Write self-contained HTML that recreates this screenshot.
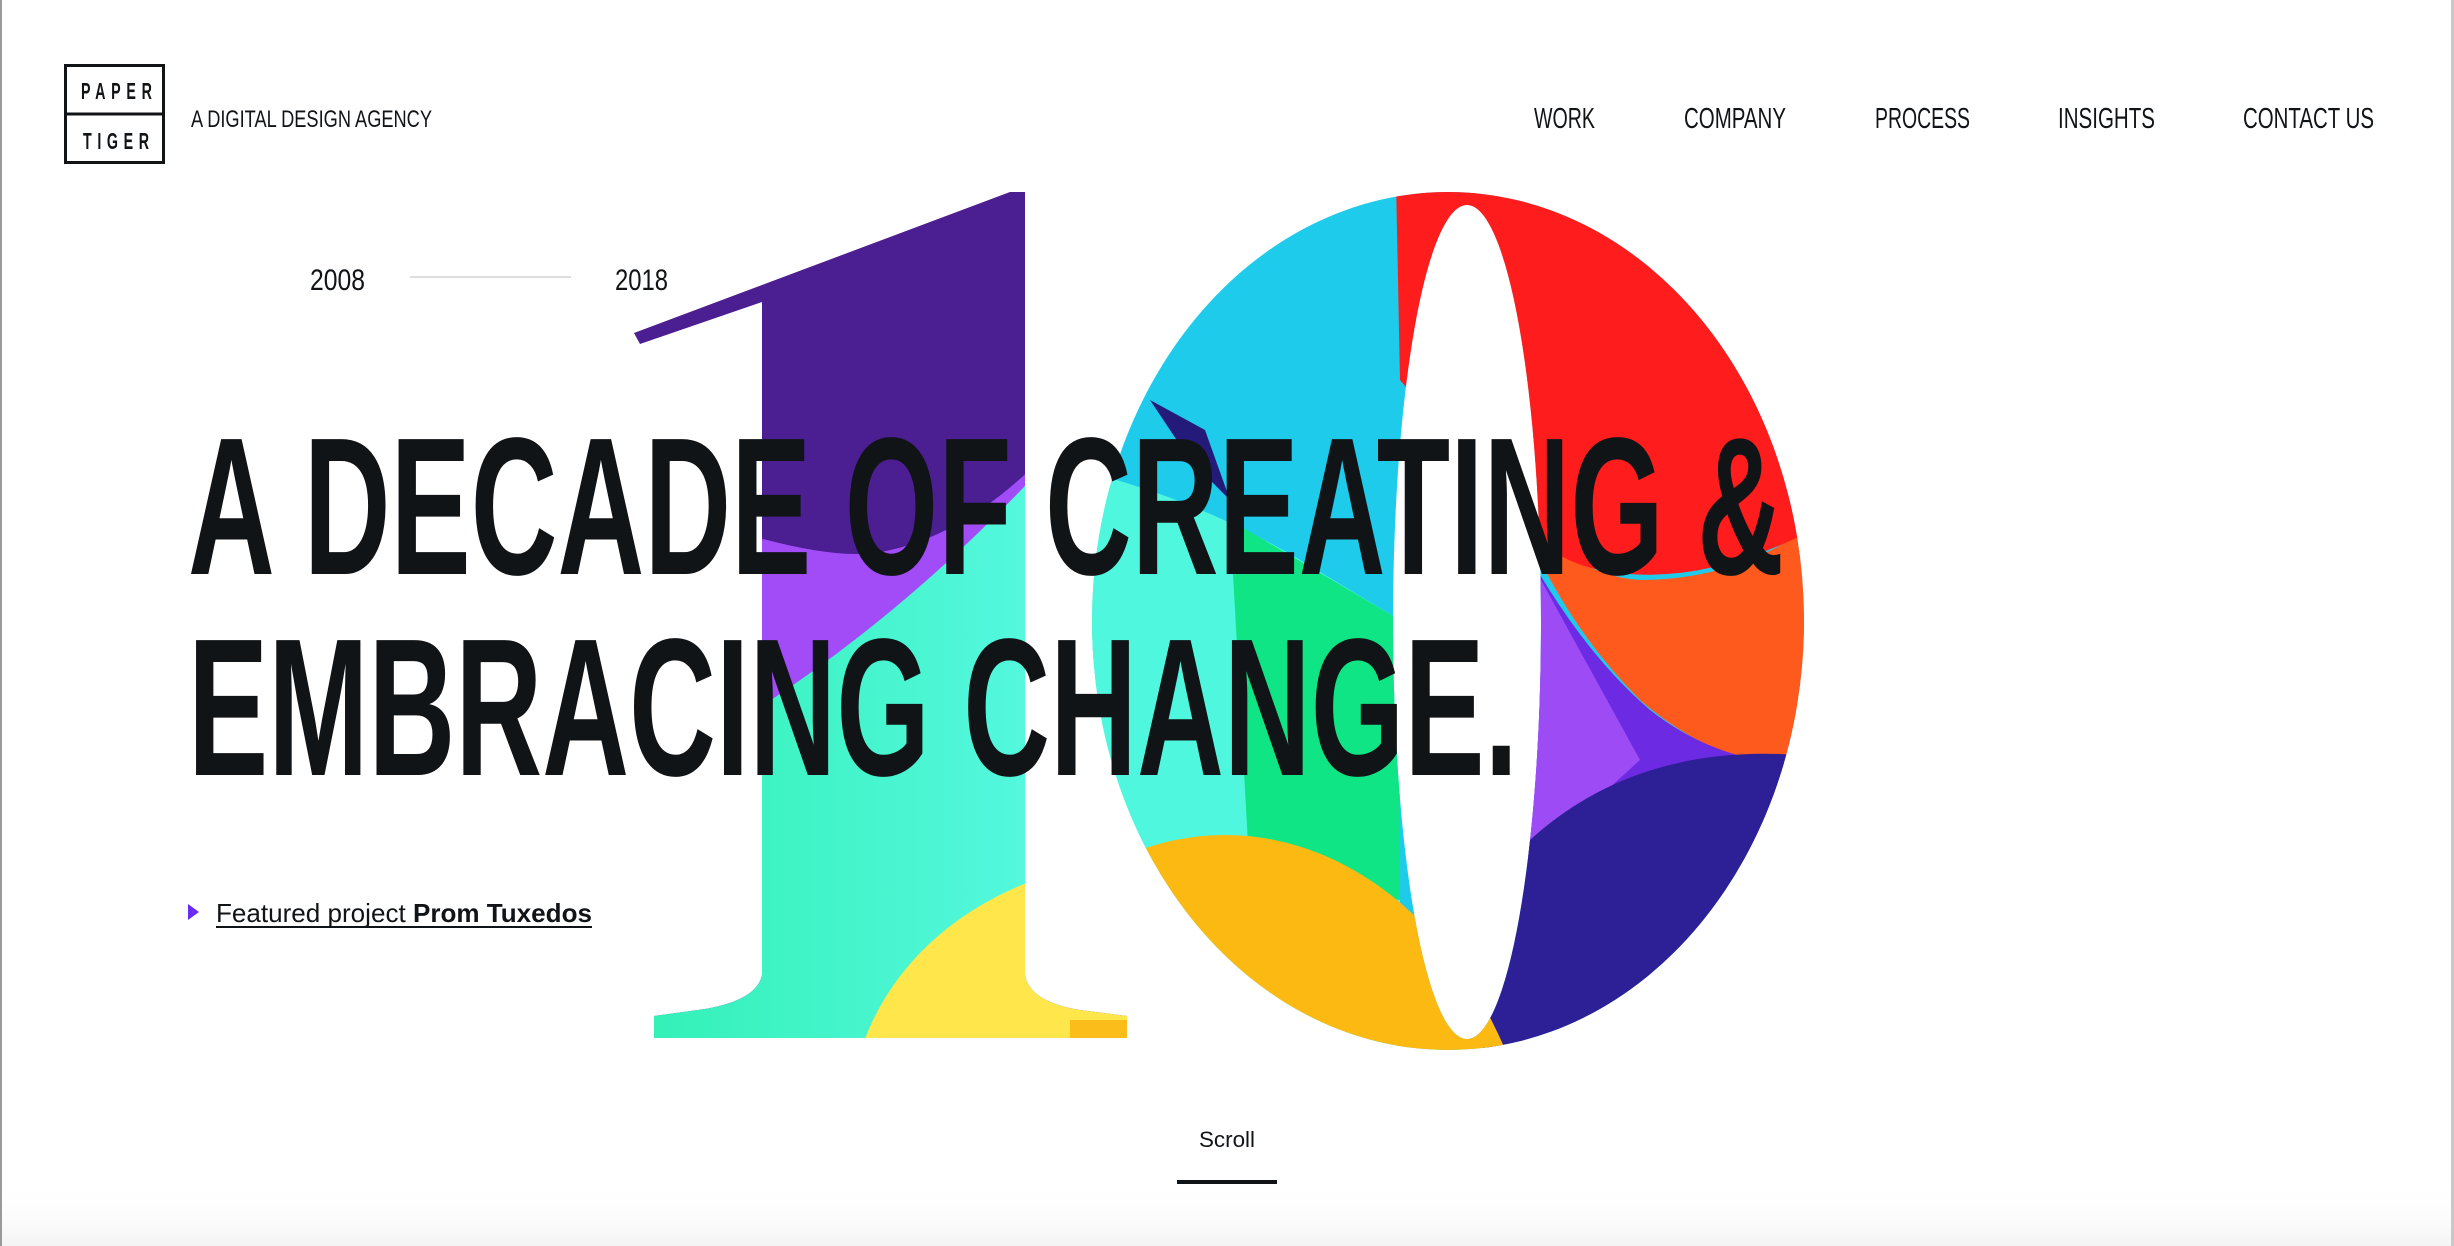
<!DOCTYPE html>
<html><head><meta charset="utf-8"><style>
html,body{margin:0;padding:0;background:#fff;width:2454px;height:1246px;overflow:hidden}
svg{display:block}
text{font-family:"Liberation Sans",sans-serif;fill:#111417}
</style></head><body>
<svg width="2454" height="1246" viewBox="0 0 2454 1246" xmlns="http://www.w3.org/2000/svg">
<defs>
<clipPath id="one"><path d="M1025 192 L1025 975 Q1030 1002 1080 1010 L1127 1016 L1127 1038 L654 1038 L654 1016 L705 1009 Q757 1000 762 975 L762 302 L640 344 L634 333 L1010 192 Z"/></clipPath>
<clipPath id="zero"><path clip-rule="evenodd" fill-rule="evenodd" d="M1092 621 A356 429 0 1 0 1804 621 A356 429 0 1 0 1092 621 Z M1393 622 A74 417 0 1 0 1541 622 A74 417 0 1 0 1393 622 Z"/></clipPath>
<linearGradient id="mint" x1="0" y1="0" x2="1" y2="0"><stop offset="0" stop-color="#2ff0b2"/><stop offset="1" stop-color="#55f8df"/></linearGradient>
<linearGradient id="bot" x1="0" y1="0" x2="0" y2="1"><stop offset="0" stop-color="#fff" stop-opacity="0"/><stop offset="1" stop-color="#f4f4f4"/></linearGradient>
</defs>
<rect x="0" y="1180" width="2454" height="66" fill="url(#bot)"/>
<rect x="0" y="0" width="2" height="1246" fill="#9a9a9a"/>
<rect x="2451" y="0" width="3" height="1246" fill="#c8c8c8"/>

<!-- ONE -->
<g clip-path="url(#one)">
<rect x="600" y="180" width="560" height="880" fill="#4b1e92"/>
<path d="M700 520 Q820 560 875 553 Q960 540 1040 460 L1040 1060 L700 1060 Z" fill="#a24cf8"/>
<path d="M1040 470 Q900 620 740 720 L600 760 L600 1060 L1040 1060 Z" fill="url(#mint)"/>
<ellipse cx="1150" cy="1120" rx="300" ry="260" fill="#ffe64a"/>
<rect x="1070" y="1020" width="60" height="20" fill="#fbbd1a"/>
</g>

<!-- ZERO -->
<g clip-path="url(#zero)">
<rect x="1080" y="180" width="740" height="880" fill="#1ecbea"/>
<path d="M1500 480 Q1560 575 1640 580 Q1740 580 1820 520 L1820 770 Q1720 770 1640 700 Q1580 640 1540 560 L1480 480 Z" fill="#ff5a1e"/>
<path d="M1396 180 L1820 180 L1820 526 Q1700 590 1600 570 Q1550 560 1520 520 L1400 380 Z" fill="#ff1c1c"/>
<path d="M1520 540 Q1580 650 1650 710 Q1720 765 1810 765 L1790 820 L1500 860 Z" fill="#6c2ae3"/>
<path d="M1530 560 L1640 760 L1530 860 Z" fill="#9d4cf5"/>
<path d="M1530 840 Q1640 740 1810 756 L1810 1060 L1480 1060 Z" fill="#2d1f95"/>
<path d="M1080 470 Q1200 500 1300 560 L1400 620 L1400 1060 L1080 1060 Z" fill="#50f7df"/>
<path d="M1230 520 L1400 620 L1400 900 L1250 880 Z" fill="#10e585"/>
<path d="M1150 400 L1205 430 L1230 500 L1190 460 Z" fill="#241a7a"/>
<ellipse cx="1225" cy="1250" rx="320" ry="415" fill="#fbb912"/>
</g>

<!-- header -->
<rect x="65.5" y="65.5" width="98" height="97" fill="none" stroke="#111417" stroke-width="3"/>
<line x1="65" y1="114" x2="164" y2="114" stroke="#111417" stroke-width="3"/>
<g transform="scale(0.62,1)">
<text x="130.6" y="99" font-size="23" font-weight="bold" textLength="114.5" lengthAdjust="spacing">PAPER</text>
<text x="133.9" y="149" font-size="23" font-weight="bold" textLength="106.5" lengthAdjust="spacing">TIGER</text>
</g>
<text x="191" y="127" font-size="24" textLength="241" lengthAdjust="spacingAndGlyphs">A DIGITAL DESIGN AGENCY</text>

<text x="1534" y="128" font-size="29" textLength="61" lengthAdjust="spacingAndGlyphs">WORK</text>
<text x="1684" y="128" font-size="29" textLength="102" lengthAdjust="spacingAndGlyphs">COMPANY</text>
<text x="1875" y="128" font-size="29" textLength="95" lengthAdjust="spacingAndGlyphs">PROCESS</text>
<text x="2058" y="128" font-size="29" textLength="97" lengthAdjust="spacingAndGlyphs">INSIGHTS</text>
<text x="2243" y="128" font-size="29" textLength="131" lengthAdjust="spacingAndGlyphs">CONTACT US</text>

<text x="310" y="290" font-size="30" textLength="55" lengthAdjust="spacingAndGlyphs">2008</text>
<rect x="410" y="276" width="161" height="2" fill="#dedede"/>
<text x="615" y="290" font-size="30" textLength="53" lengthAdjust="spacingAndGlyphs">2018</text>

<!-- headline -->
<text x="188" y="574" font-size="196" font-weight="bold" textLength="1596" lengthAdjust="spacingAndGlyphs">A DECADE OF CREATING &amp;</text>
<text x="188" y="775" font-size="196" font-weight="bold" textLength="1330" lengthAdjust="spacingAndGlyphs">EMBRACING CHANGE.</text>

<!-- featured -->
<path d="M188 904 L199 912 L188 920 Z" fill="#6a2bf2"/>
<text x="216" y="922" font-size="26" textLength="376" lengthAdjust="spacingAndGlyphs">Featured project <tspan font-weight="bold">Prom Tuxedos</tspan></text>
<rect x="216" y="926" width="376" height="2" fill="#111417"/>

<!-- scroll -->
<text x="1199" y="1147" font-size="22" textLength="56" lengthAdjust="spacingAndGlyphs">Scroll</text>
<rect x="1177" y="1180" width="100" height="4" fill="#111417"/>
</svg>
</body></html>
